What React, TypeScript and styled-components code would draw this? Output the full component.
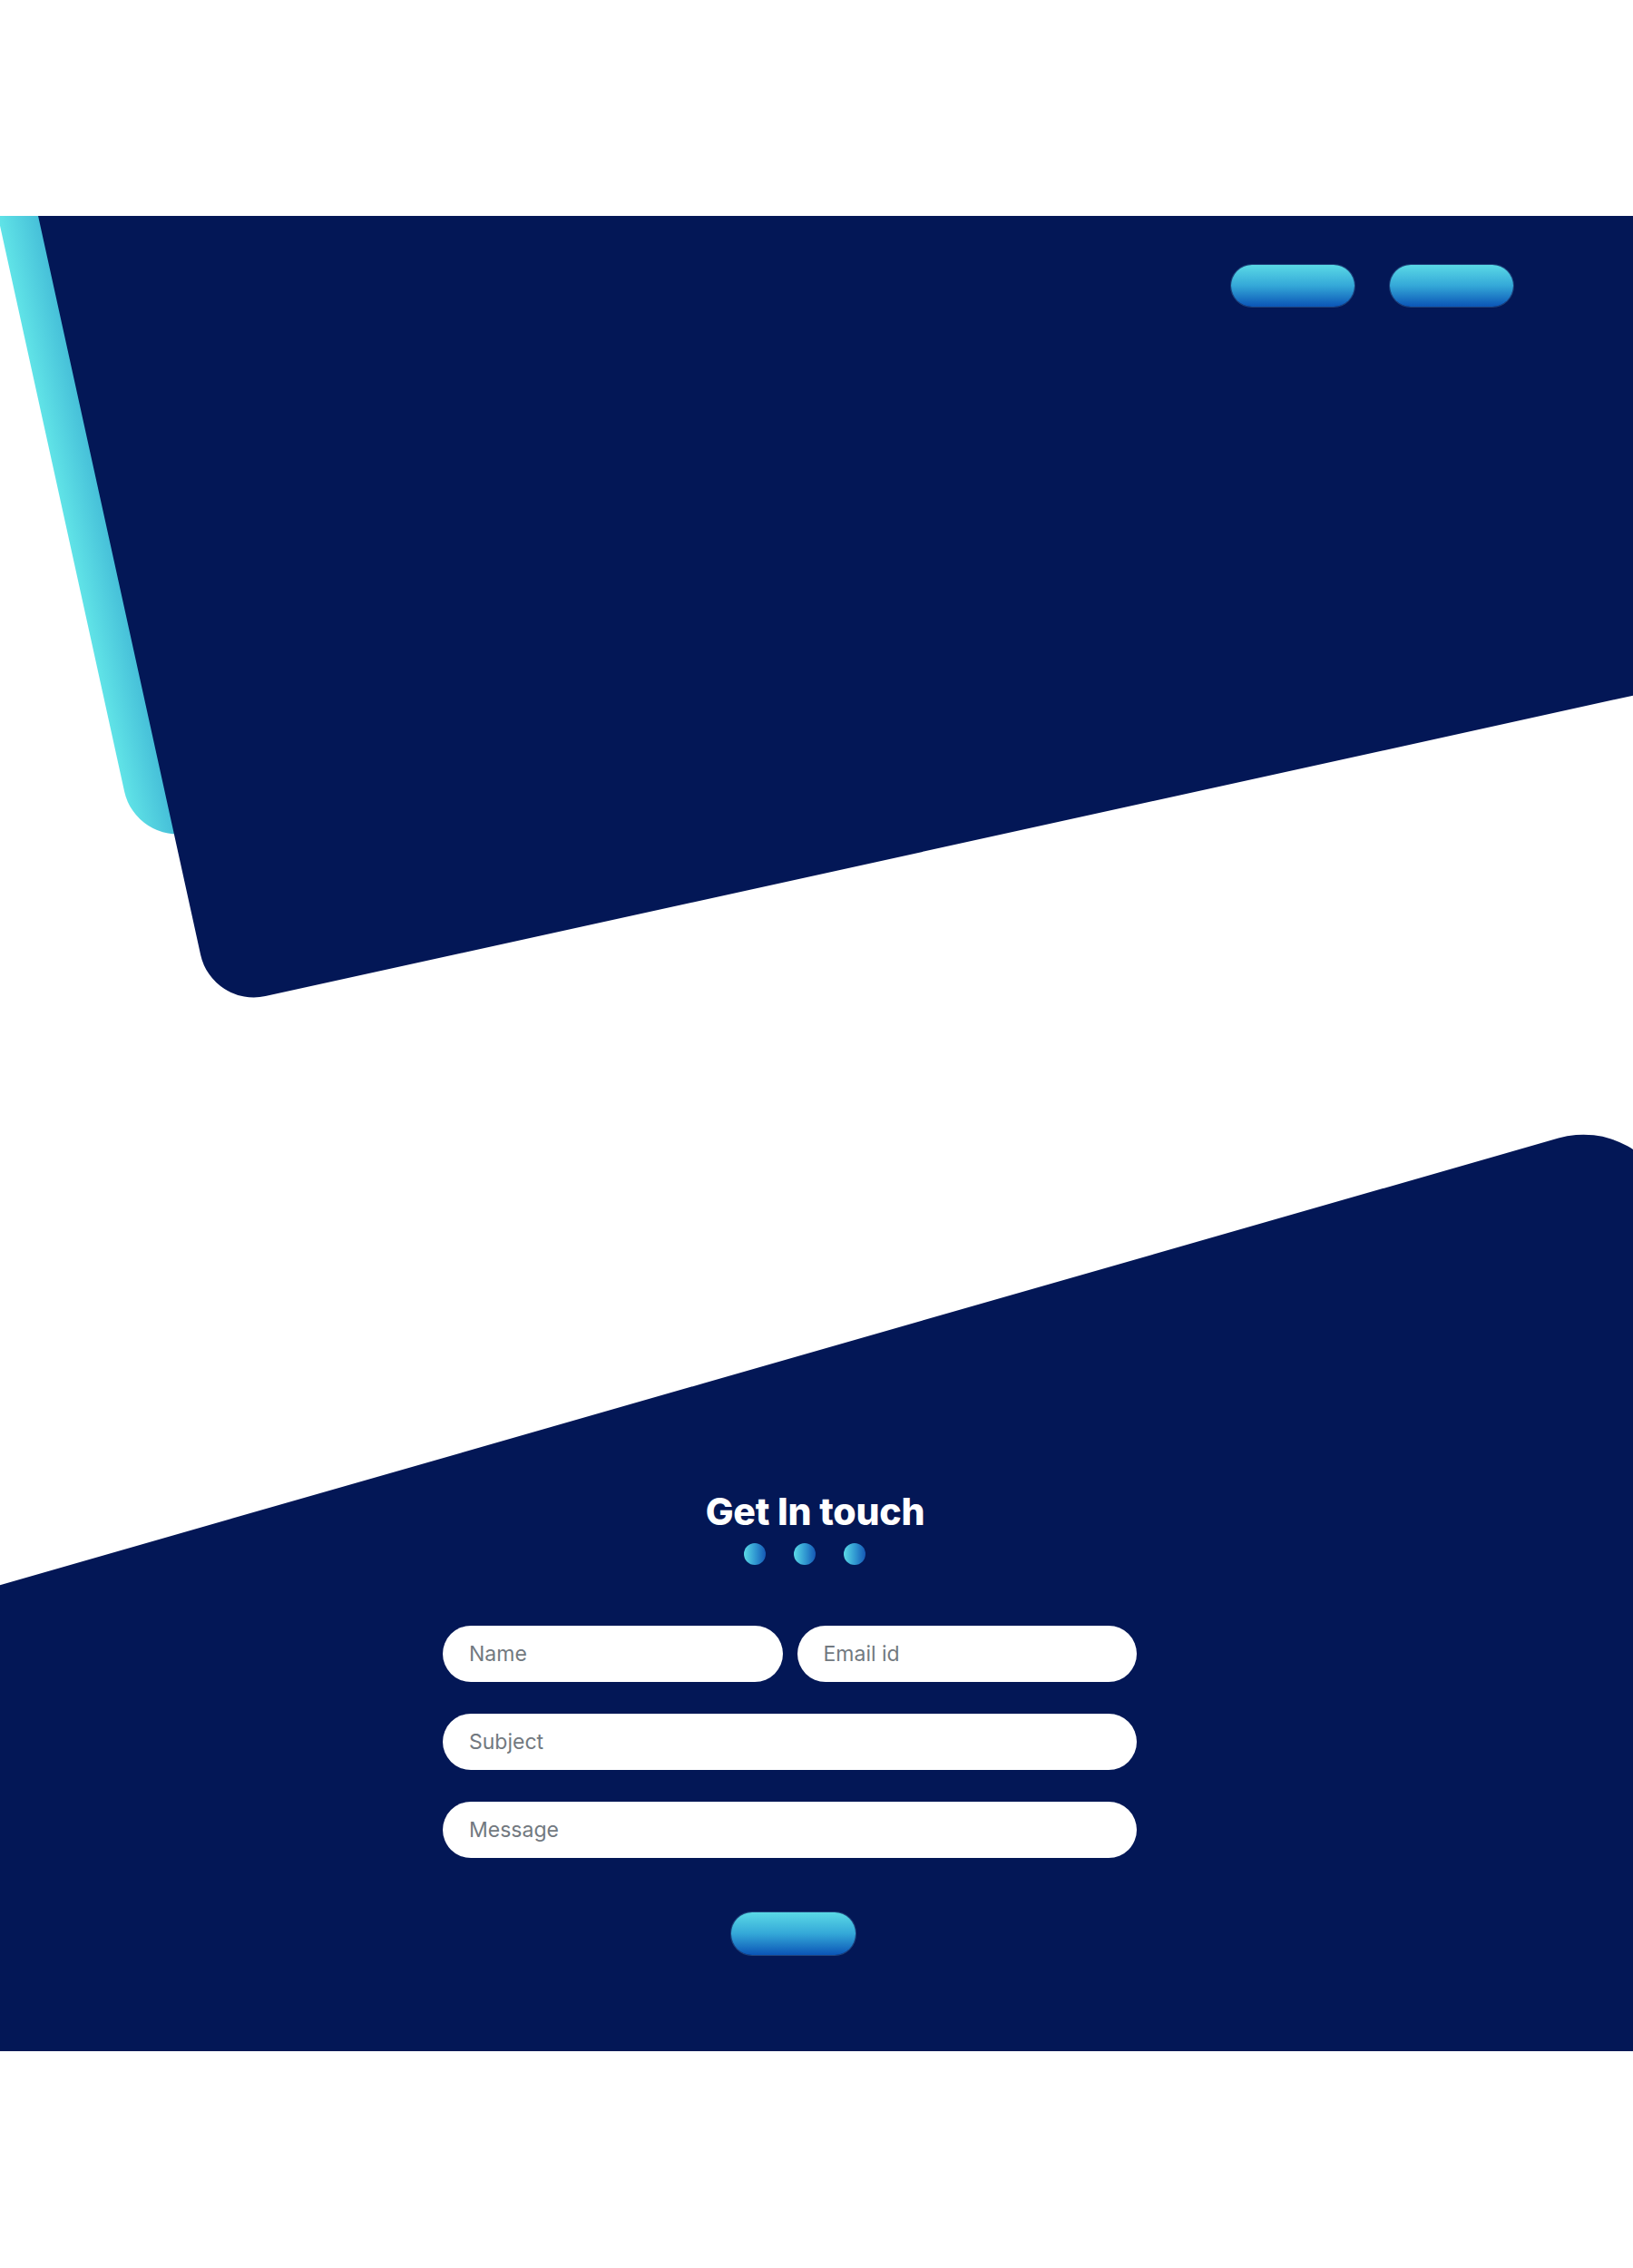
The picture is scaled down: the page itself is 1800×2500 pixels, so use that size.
import React from "react";
import styled, { createGlobalStyle } from "styled-components";

const navy = "#031756";

const GlobalStyle = createGlobalStyle`
  html, body {
    margin: 0;
    padding: 0;
    background: #ffffff;
    font-family: "Inter", "Noto Sans", "Liberation Sans", sans-serif;
  }
  * {
    box-sizing: border-box;
  }
`;

const Page = styled.div`
  width: 100%;
  min-height: 2500px;
  padding-top: 238px;
  overflow-x: hidden;
`;

// hero block, slanted panels are drawn behind the nav
const Hero = styled.section`
  position: relative;
  height: 880px;
  overflow: hidden;
`;

const Slab = styled.div<{ $accent?: boolean }>`
  position: absolute;
  left: ${(p) => (p.$accent ? "150px" : "234px")};
  top: ${(p) => (p.$accent ? "-707px" : "-527px")};
  width: 2200px;
  height: 1400px;
  border-radius: 60px;
  transform-origin: left bottom;
  transform: rotate(-12.4deg);
  background: ${(p) =>
    p.$accent
      ? "linear-gradient(90deg, #60e3e7 0px, #45bed8 46px, #45bed8 100%)"
      : navy};
`;

const Nav = styled.nav`
  position: relative;
  z-index: 1;
  display: flex;
  justify-content: flex-end;
  gap: 39px;
  padding: 54px 132px 0 0;
`;

const PillButton = styled.button`
  width: 136px;
  height: 46px;
  border: none;
  border-radius: 23px;
  padding: 0;
  cursor: pointer;
  background: linear-gradient(180deg, #5ad9e6 0%, #34a8d8 50%, #0b55b6 100%);
  box-shadow: 0 0 0 1px rgba(120, 200, 240, 0.25);
`;

const Contact = styled.section`
  position: relative;
  margin-top: 82px;
  height: 1061px;
  overflow: hidden;
`;

const ContactSlab = styled.div`
  position: absolute;
  left: -586px;
  top: 27px;
  width: 2400px;
  height: 1600px;
  border-radius: 100px;
  transform-origin: right top;
  transform: rotate(-16deg);
  background: ${navy};
`;

const ContactInner = styled.div`
  position: relative;
  z-index: 1;
  width: 765px;
  margin-left: 488px;
  padding-top: 442px;
  display: flex;
  flex-direction: column;
`;

const Heading = styled.h2`
  margin: 0;
  padding-left: 56px;
  text-align: center;
  color: #ffffff;
  font-size: 41px;
  line-height: 48px;
  font-weight: 800;
  letter-spacing: -0.2px;
`;

const Dots = styled.div`
  display: flex;
  justify-content: center;
  gap: 31px;
  margin-top: 11px;
  padding-left: 32px;
`;

const Dot = styled.span`
  width: 24px;
  height: 24px;
  border-radius: 50%;
  background: linear-gradient(90deg, #5ad9e6 0%, #2f95d0 55%, #1558b5 100%);
`;

const Form = styled.form`
  display: flex;
  flex-direction: column;
  gap: 35px;
  margin-top: 67px;
`;

const Row = styled.div`
  display: flex;
  gap: 16px;
`;

const Field = styled.input`
  flex: 1;
  min-width: 0;
  height: 62px;
  border: none;
  border-radius: 31px;
  padding: 0 29px;
  background: #ffffff;
  font-family: "Inter", "Noto Sans", sans-serif;
  font-size: 23px;
  color: #333;
  outline: none;

  &::placeholder {
    color: #727980;
  }
`;

const SubmitRow = styled.div`
  display: flex;
  justify-content: center;
  padding-left: 8px;
  margin-top: 25px;
`;

const SubmitButton = styled(PillButton)`
  width: 137px;
  height: 47px;
`;

export default function App() {
  return (
    <>
      <GlobalStyle />
      <Page>
        <Hero>
          <Slab $accent />
          <Slab />
          <Nav>
            <PillButton aria-label="menu one" />
            <PillButton aria-label="menu two" />
          </Nav>
        </Hero>

        <Contact>
          <ContactSlab />
          <ContactInner>
            <Heading>Get In touch</Heading>
            <Dots>
              <Dot />
              <Dot />
              <Dot />
            </Dots>
            <Form onSubmit={(e) => e.preventDefault()}>
              <Row>
                <Field placeholder="Name" />
                <Field placeholder="Email id" />
              </Row>
              <Row>
                <Field placeholder="Subject" />
              </Row>
              <Row>
                <Field placeholder="Message" />
              </Row>
              <SubmitRow>
                <SubmitButton type="submit" aria-label="send" />
              </SubmitRow>
            </Form>
          </ContactInner>
        </Contact>
      </Page>
    </>
  );
}
